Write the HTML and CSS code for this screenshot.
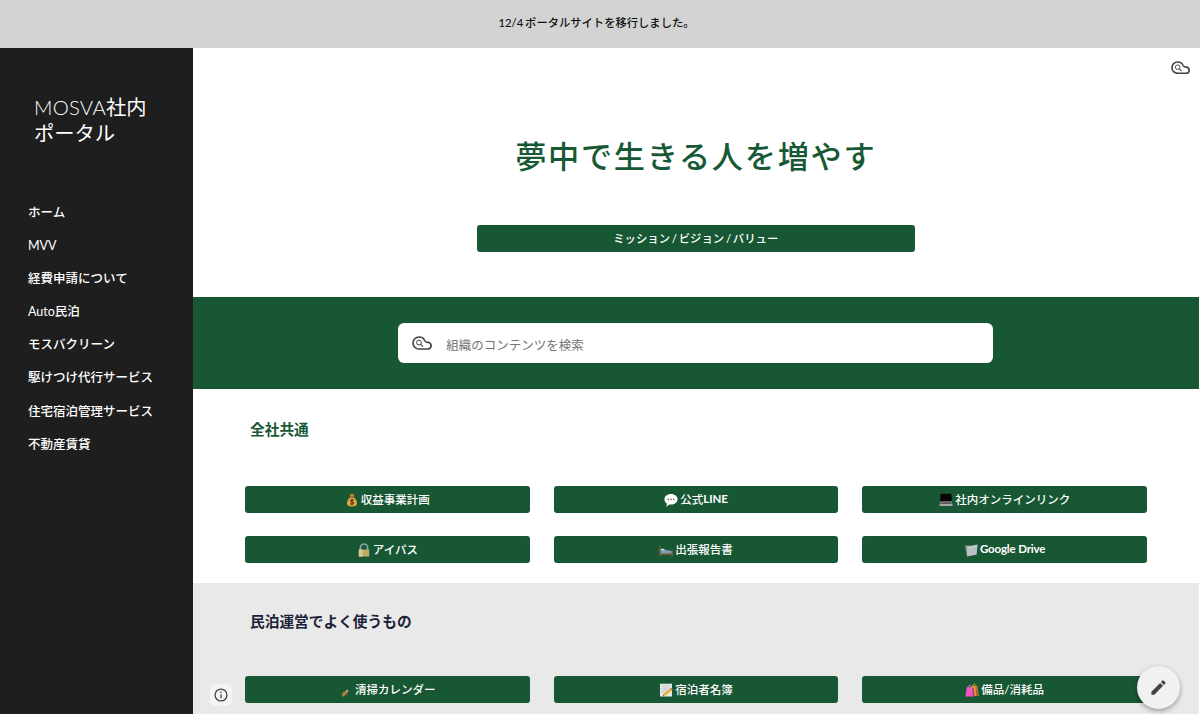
FILE: index.html
```html
<!DOCTYPE html>
<html lang="ja">
<head>
    <meta charset="utf-8">
    <title>MOSVA社内ポータル</title>
    <link rel="stylesheet" href="styles.css">
</head>
<body>
<svg class="defs" width="0" height="0">
    <symbol id="cloud-search" viewBox="0 0 20 14">
        <path d="M7 1a6 6 0 0 0 0 12h8.800a3.300 3.300 0 0 0 0-6.600c-1.700 0-2.500-.4-3.200-1.900C11.800 2.400 10 1 7 1z" fill="none" stroke="currentColor" stroke-width="1.700"/>
        <circle cx="7" cy="6.500" r="2.400" fill="none" stroke="currentColor" stroke-width="1"/>
        <path d="M8.800 8.300l2.300 2.300" stroke="currentColor" stroke-width="1.200"/>
    </symbol>
</svg>

<div class="banner">12/4 ポータルサイトを移行しました。</div>

<div class="layout">
    <nav class="sidebar">
        <a class="site-title" href="#"><span class="latin">MOSVA</span>社内<br>ポータル</a>
        <ul class="menu">
            <li><a href="#">ホーム</a></li>
            <li><a href="#"><span class="latin">MVV</span></a></li>
            <li><a href="#">経費申請について</a></li>
            <li><a href="#"><span class="latin">Auto</span>民泊</a></li>
            <li><a href="#">モスバクリーン</a></li>
            <li><a href="#">駆けつけ代行サービス</a></li>
            <li><a href="#">住宅宿泊管理サービス</a></li>
            <li><a href="#">不動産賃貸</a></li>
        </ul>
    </nav>

    <main class="content">
        <section class="hero">
            <svg class="hero-search"><use href="#cloud-search"/></svg>
            <h1>夢中で生きる人を増やす</h1>
            <a class="btn btn-mission" href="#">ミッション / ビジョン / バリュー</a>
        </section>

        <section class="search-band">
            <div class="search-box">
                <svg class="search-icon"><use href="#cloud-search"/></svg>
                <span>組織のコンテンツを検索</span>
            </div>
        </section>

        <section class="links">
            <h2>全社共通</h2>
            <div class="grid">
                <a class="btn" href="#">
                    <svg class="emoji" viewBox="0 0 14 14">
                        <path d="M4.500 1l1.500.6L7 .8l1 .8L9.500 1 8.600 4H5.400z" fill="#c98a2b"/>
                        <path d="M5.400 4h3.200c2.200 1.800 3.400 4 3.400 6.200C12 12.600 10.500 13.500 7 13.500S2 12.600 2 10.200C2 8 3.200 5.800 5.400 4z" fill="#e3a23c"/>
                        <path d="M5 4h4" stroke="#a3422a" stroke-width="1"/>
                        <path d="M8.900 7.300C7.800 6.300 5.400 6.600 5.500 8s3.300.7 3.200 2.200-2.600 1.400-3.500.4M7 5.900v6.200" fill="none" stroke="#3f3015" stroke-width="1"/>
                    </svg>
                    収益事業計画</a>
                <a class="btn" href="#">
                    <svg class="emoji" viewBox="0 0 14 14">
                        <path d="M7 1c3.700 0 6.600 2.300 6.600 5.300S10.700 11.600 7 11.600c-.7 0-1.400-.1-2-.2-.6 1.100-1.700 1.800-3 2 .7-.8 1-1.700.9-2.700C1.300 9.700.4 8.100.4 6.300.4 3.300 3.300 1 7 1z" fill="#fff"/>
                        <circle cx="4.300" cy="6.400" r=".8" fill="#865a62"/><circle cx="7" cy="6.400" r=".8" fill="#865a62"/><circle cx="9.700" cy="6.400" r=".8" fill="#865a62"/>
                    </svg>
                    公式<span class="strong">LINE</span></a>
                <a class="btn" href="#">
                    <svg class="emoji" viewBox="0 0 14 14">
                        <path d="M1.500.8h10.800l.5 7.700H1.200z" fill="#060606"/>
                        <path d="M1.300 8.500h11.500l.9 4.500H.4z" fill="#a5a3a5"/>
                        <path d="M1.700 9.300h10.700l.4 1.700H1.300z" fill="#625259"/>
                    </svg>
                    社内オンラインリンク</a>
                <a class="btn" href="#">
                    <svg class="emoji" viewBox="0 0 14 14">
                        <path d="M3.400 7.500V4.600a3.600 3.600 0 0 1 7.200 0v2.900" fill="none" stroke="#91a7a7" stroke-width="1.600"/>
                        <path d="M1.800 6.600h10.400v6.900H1.800z" fill="#c1ae70"/>
                        <path d="M1.800 6.600h4v6.900h-4z" fill="#e0d29c"/>
                        <path d="M1.800 9h10.400M1.800 11.300h10.400" stroke="#ac995c" stroke-width=".5"/>
                    </svg>
                    アイパス</a>
                <a class="btn" href="#">
                    <svg class="emoji" viewBox="0 0 14 14">
                        <path d="M1.300 6.500h3.500l8 1.500v2.800H1.300z" fill="#7d9fb3"/>
                        <path d="M2 5.700h2.700l1.200 1.500H2z" fill="#d5dfe4"/>
                        <path d="M.8 3v10M13.200 7v6M.8 11.100h12.400" stroke="#8b5944" stroke-width="1.200" fill="none"/>
                    </svg>
                    出張報告書</a>
                <a class="btn" href="#">
                    <svg class="emoji" viewBox="0 0 14 14">
                        <path d="M.7 2.800l4-.8 1.200.9 7.200-1.400-.4 10-9.700 2z" fill="#7f8f93"/>
                        <path d="M3 4.300l10.600-2.100-1.200 9.300-9.200 2z" fill="#b9c0c3"/>
                        <path d="M3 4.300l10.600-2.100" stroke="#e8eced" stroke-width=".6"/>
                    </svg>
                    <span class="strong">Google Drive</span></a>
            </div>
        </section>

        <section class="links links-grey">
            <h2>民泊運営でよく使うもの</h2>
            <div class="grid">
                <a class="btn" href="#">
                    <svg class="emoji" viewBox="0 0 14 14">
                        <path d="M4.500 8.700l3.600-.6.300 2.200-3.600 3.200-1.500-.3-.3-1.600z" fill="#c9823b"/>
                        <path d="M6.800 8l1.700-1.400.8.6-1 1.800z" fill="#d9c6a2"/>
                        <path d="M4.400 11l1.300 1.500M5.800 9.800l1.200 1.400" stroke="#744d29" stroke-width=".7"/>
                    </svg>
                    清掃カレンダー</a>
                <a class="btn" href="#">
                    <svg class="emoji" viewBox="0 0 14 14">
                        <path d="M1 .7h12v12.800H1z" fill="#e5e8e8"/>
                        <path d="M2.500 3h8.500M2.500 5.200h7M2.500 7.400h5M2.500 9.600h3" stroke="#adb8b9" stroke-width=".7"/>
                        <path d="M4.700 10.200l6.700-5 1.700 2.100-6.600 5.100-2.600.6z" fill="#e3b338"/>
                        <path d="M11 5.500l1.200-.9 1.700 2.100-1.200.9z" fill="#ce7164"/>
                        <path d="M3.900 13l.4-1.300.8 1z" fill="#4e3c25"/>
                    </svg>
                    宿泊者名簿</a>
                <a class="btn" href="#">
                    <svg class="emoji" viewBox="0 0 14 14">
                        <path d="M7 2.500l5.400.5 1.200 10H6z" fill="#dba02e"/>
                        <path d="M10.500 3l1.900 0 1.200 10h-2.500z" fill="#a76c28"/>
                        <path d="M7.500 3.500c0-3.300 3.300-3.300 3.500 0" fill="none" stroke="#dba02e" stroke-width=".9"/>
                        <path d="M1.700 4.400l5.500-.5 1.800 9.600H.4z" fill="#ee55bd"/>
                        <path d="M7.200 3.900l1.500.8.8 8.800H8z" fill="#ad3187"/>
                        <path d="M2.800 6c0-4.700 3.500-5 3.700-.2" fill="none" stroke="#f38bd0" stroke-width=".9"/>
                    </svg>
                    備品/消耗品</a>
            </div>
        </section>
    </main>
</div>

<div class="info">
    <svg viewBox="0 0 14 14">
        <circle cx="7" cy="7" r="5.900" fill="none" stroke="#444" stroke-width="1.300"/>
        <path d="M7 6.300v4M7 3.600v1.400" stroke="#444" stroke-width="1.300"/>
    </svg>
</div>
<div class="edit">
    <svg viewBox="0 0 24 24">
        <path d="M3 17.250V21h3.750L17.810 9.940l-3.750-3.750L3 17.250zM20.710 7.040a1 1 0 0 0 0-1.410l-2.340-2.340a1 1 0 0 0-1.410 0l-1.830 1.830 3.750 3.750 1.830-1.830z" fill="#424242"/>
    </svg>
</div>
</body>
</html>
```
FILE: styles.css
```css
* {
    box-sizing: border-box;
}

body {
    margin: 0;
    height: 714px;
    overflow: hidden;
    background: #fff;
    font-family: Lato, "Noto Sans CJK JP", sans-serif;
    font-size: 11.5px;
    color: #212121;
}

a {
    color: inherit;
    text-decoration: none;
}

.defs {
    position: absolute;
}

.banner {
    height: 48px;
    padding-bottom: 5px;
    padding-right: 7px;
    display: flex;
    align-items: center;
    justify-content: center;
    background: #d3d3d3;
    font-size: 11.3px;
    font-weight: 500;
    word-spacing: -1px;
    color: #111;
}

.layout {
    display: flex;
    height: 666px;
}

.sidebar {
    width: 192.5px;
    flex: none;
    padding: 47px 0 0 28px;
    background: #1e1e1e;
    color: #fff;
}

.site-title {
    display: block;
    padding-left: 6px;
    font-size: 20.3px;
    font-weight: 400;
    line-height: 25.5px;
}

.site-title .latin {
    font-weight: 300;
    letter-spacing: .25px;
}

.menu {
    list-style: none;
    margin: 50px 0 0;
    padding: 0;
    font-size: 12.5px;
    font-weight: 500;
    line-height: 33.1px;
}

.menu .latin {
    font-weight: 400;
}

.menu li {
    height: 33.1px;
}

.content {
    width: 1006.5px;
    flex: none;
}

.hero {
    position: relative;
    height: 249px;
    padding-top: 84px;
    display: flex;
    flex-direction: column;
    align-items: center;
}

.hero-search {
    position: absolute;
    top: 13px;
    right: 9px;
    width: 19px;
    height: 13.3px;
    color: #444;
}

h1 {
    margin: 0;
    font-size: 31.2px;
    font-weight: 500;
    line-height: 48px;
    letter-spacing: 1.7px;
    color: #185935;
}

.btn {
    display: flex;
    align-items: center;
    justify-content: center;
    height: 27px;
    padding-bottom: 2px;
    border-radius: 3px;
    background: #185733;
    color: #fff;
    font-size: 11.5px;
    font-weight: 500;
    white-space: nowrap;
}

.btn-mission {
    width: 438px;
    margin-top: 45px;
    font-size: 11.4px;
    word-spacing: -1.2px;
}

.strong {
    font-weight: 700;
    letter-spacing: -.15px;
}

.emoji {
    width: 14px;
    height: 14px;
    margin: 2px 2px 0 0;
}

.search-band {
    height: 92px;
    padding-top: 26px;
    background: #185733;
}

.search-box {
    width: 595px;
    height: 40px;
    margin: 0 auto;
    padding-left: 14px;
    display: flex;
    align-items: center;
    border-radius: 6px;
    background: #fff;
    font-size: 12.5px;
    color: #757575;
}

.search-box span {
    padding-top: 2px;
}

.search-icon {
    width: 20px;
    height: 14px;
    margin-right: 14px;
    color: #444;
}

.links {
    height: 194px;
    padding: 26px 52px 0 52.5px;
}

h2 {
    margin: 0 0 43px 5px;
    font-size: 14.7px;
    line-height: 28px;
    font-weight: 700;
    color: #185733;
}

.grid {
    display: grid;
    grid-template-columns: repeat(3, 1fr);
    gap: 23px 24px;
}

.links-grey {
    height: 131px;
    padding-top: 24px;
    background: #e9e9e9;
}

.links-grey h2 {
    margin-bottom: 41px;
    color: #1b2238;
}

.info,
.edit {
    position: fixed;
    display: flex;
    align-items: center;
    justify-content: center;
}

.info {
    left: 210px;
    top: 684px;
    width: 22px;
    height: 22px;
    border-radius: 6px;
    background: #f4f4f4;
}

.info svg {
    width: 14px;
    height: 14px;
}

.edit {
    left: 1137px;
    top: 666px;
    width: 43px;
    height: 43px;
    border-radius: 50%;
    background: #f1f1f1;
    box-shadow: 0 2px 5px rgba(0, 0, 0, 0.35);
}

.edit svg {
    width: 19px;
    height: 19px;
}
```
